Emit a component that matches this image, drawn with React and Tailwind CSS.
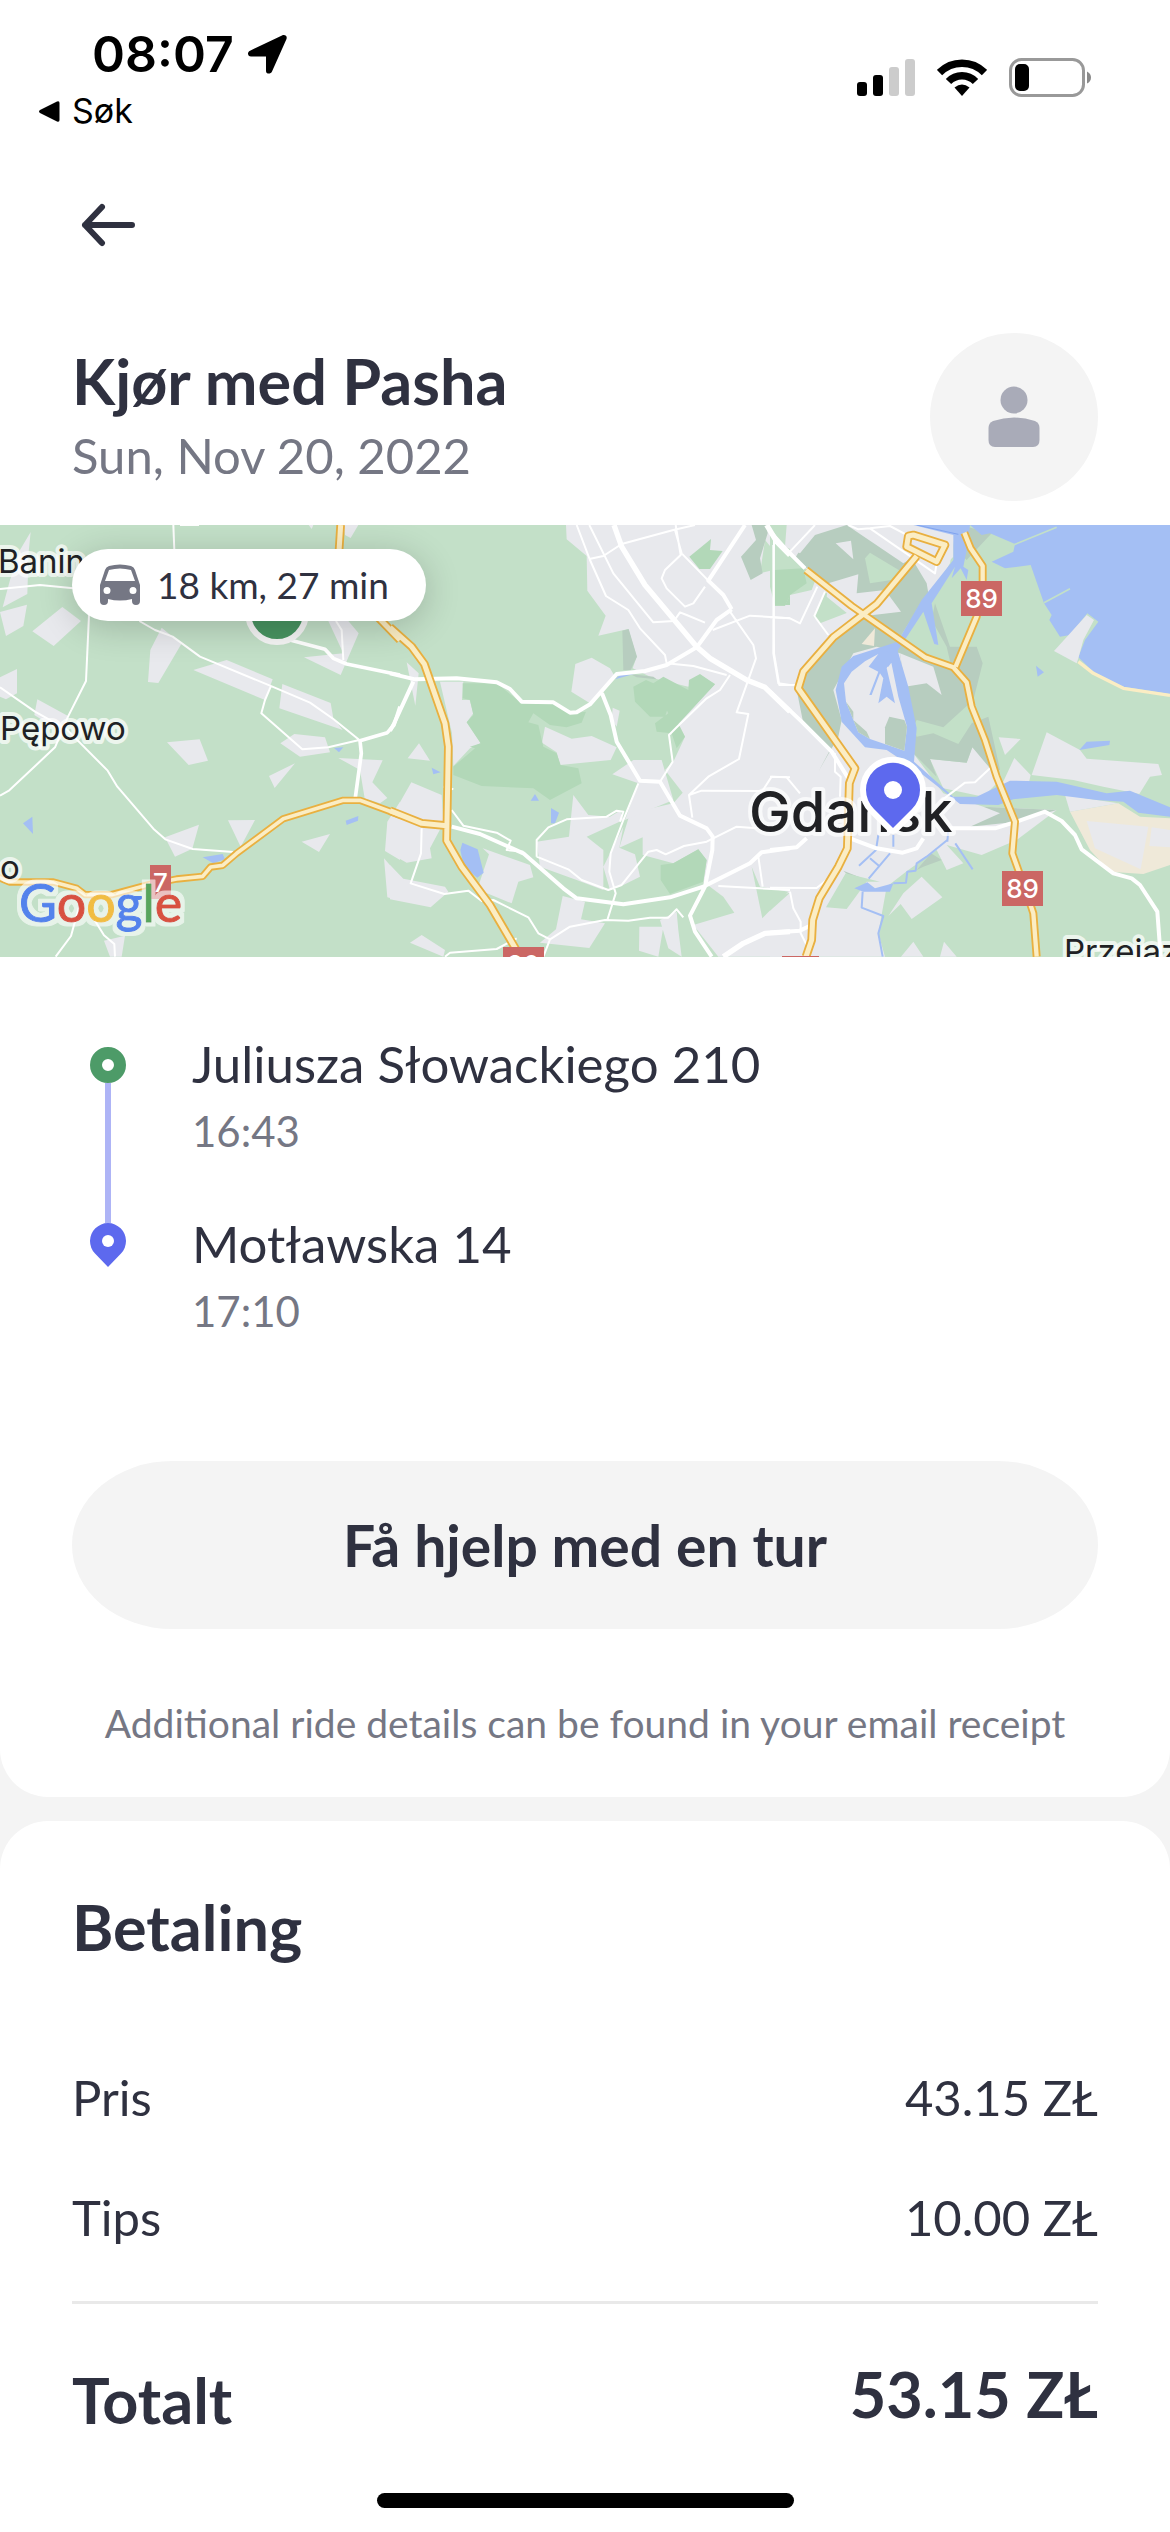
// Each map tile is drawn on its own 1200x1320 grid and placed side by side
const TILES = {
  west: 'translate(0 -5) scale(0.33333)',
  centre: 'translate(390 -5) scale(0.33333)',
  east: 'translate(770 -5) scale(0.33333)',
};

const LAND = [
  // built-up areas
  { tile: 'west', fill: '#e8e9ed', d: 'M92 36L86 95 82 222 8 262 30 180 60 90zM0 276L81 254 70 318 18 348zM97 334L187 261 243 303 161 378zM485 323L544 372 475 489 444 486 451 390zM580 450L680 420 818 478 795 540zM847 492L992 549 1000 595 1028 630 838 565zM985 303L1045 303 1076 340 1022 465 912 412 1030 400zM0 500L0 472 51 447 51 520 18 538 0 530zM112 538L204 588 190 640 103 585zM501 667L599 658 624 722 566 735zM883 642L975 652 990 697 900 710 841 670zM885 730L824 804 807 768zM1015 714L1148 721 1117 787 1162 834 1140 850 1094 835 1080 750zM684 901L765 900 722 980zM495 952L597 914 577 986 525 1010zM905 965L990 942 957 996zM1200 845L1162 905 1155 993 1200 1020zM1152 1015L1200 1070 1200 1142 1162 1132zM312 1262L375 1247 365 1310 330 1310zM1030 15L1075 15 1052 54 1035 45zM926 15L940 15 935 27z' },
  { tile: 'centre', fill: '#e8e9ed', d: 'M528 15L530 58 590 108 592 212 647 287 625 347 715 327 740 410 728 445 790 475 895 500 930 465 975 492 865 610 885 650 850 725 825 750 878 818 850 850 720 880 688 983 758 952 758 1005 850 1030 925 988 950 1020 940 1085 1000 1130 1033 1178 910 1215 985 1310 1200 1310 1200 15z' },
  { tile: 'centre', fill: '#e8e9ed', d: 'M556 432L605 413 660 445 672 465 635 520 600 550 544 515zM465 620L545 656 605 648 680 682 662 720 510 735 500 697 456 668zM668 563L689 572 680 620 665 600zM50 427L86 460 76 557zM150 485L220 485 216 540 239 540 250 580 230 607 272 670 240 685 190 738 186 640zM87 670L120 722 53 715zM64 787L155 825 160 910 120 985 125 1015 50 1028 0 1000 0 900zM0 1035L40 1076 165 1100 175 1115 122 1162 0 1138zM278 985L420 1035 430 1072 385 1085 365 1150 262 1108 297 1003zM95 1245L165 1290 160 1310 60 1268zM550 825L595 885 660 890 690 872 700 900 590 950 640 990 640 1110 560 1080 450 1040 440 965 537 950zM730 720L815 720 850 840 705 900 745 790 667 763zM700 920L688 983 735 1003 750 1070 700 1095 660 1110 640 1040zM518 1128L585 1145 573 1198 645 1210 598 1284 450 1268 498 1228zM748 1220L820 1220 805 1310 747 1292zM810 1200L860 1175 865 1230 875 1310 835 1285z' },
  { tile: 'east', fill: '#e8e9ed', d: 'M0 15L560 15 540 130 480 230 385 350 395 400 490 440 515 525 470 490 405 500 430 600 430 700 520 820 640 860 860 870 740 960 635 1005 530 975 580 1030 530 1050 500 990 415 1050 350 1100 325 1240 345 1310 0 1310zM480 717L590 728 607 682 670 740 690 780 640 830 520 805zM686 652L752 657 705 705zM830 637L930 690 950 716 1165 732 1176 765 1140 770 1108 822 1000 800 910 780 785 765zM733 714L782 765 775 795 695 795zM455 1070L517 1132 425 1197 392 1152 355 1188 400 1120zM430 1265L460 1310 393 1310zM522 1265L560 1310 510 1310z' },

  // parks and woods
  { tile: 'centre', fill: '#c3e0c8', d: 'M1085 1040L1110 1100 1195 1115 1117 1195zM1150 15L1200 15 1200 180 1150 180zM1125 60L1150 90 1150 150 1110 160z' },
  { tile: 'centre', fill: '#b2d8b8', d: 'M218 490L320 490 395 550 490 550 545 580 588 575 575 608 530 622 480 615 430 580 415 607 445 615 460 680 500 700 512 735 565 745 575 790 480 840 430 805 275 798 190 765 190 740 255 685 240 680 272 670 230 607 250 585 240 540 218 535zM730 500L768 480 825 505 838 550 825 590 780 590 735 545zM790 490L820 470 895 510 897 480 930 462 975 493 865 612 885 650 860 685 845 640 800 635 795 610 835 580zM898 110L963 57 960 90 998 93 960 147 928 147zM812 1035L850 1030 925 988 950 1020 940 1085 840 1122 812 1080zM1157 160L1200 160 1200 255 1157 255z' },
  { tile: 'centre', fill: '#b7cdbf', d: 'M1085 15L1130 15 1133 40 1110 115 1118 160 1082 180 1053 110 1098 60zM697 332L716 327 741 410 722 450 700 450zM720 462L790 470 800 478 740 472z' },
  { tile: 'east', fill: '#b7cdbf', d: 'M135 15L230 15 400 130 425 115 470 190 475 220 390 350 470 400 545 445 530 380 485 300 495 250 540 380 620 380 638 430 610 540 520 622 440 600 430 620 440 650 490 640 565 672 605 610 655 590 690 750 660 745 607 682 590 728 480 717 500 770 430 700 400 600 345 690 345 620 358 590 405 600 405 500 390 400 320 380 250 400 190 510 215 600 205 650 145 755 180 690 100 610 80 510 100 450 190 350 270 290 190 210 75 115zM570 15L665 40 590 120 570 100zM440 1050L483 1000 515 1020 460 1040zM640 860L860 870 740 905 600 920 690 880zM220 1052L290 1080 260 1088z' },
  { tile: 'east', fill: '#c3e0c8', d: 'M0 15L45 15 45 80 75 110 110 150 140 170 125 210 60 225 45 257 15 257 0 200zM285 115L300 98 395 155 365 180 300 190zM130 290L165 215 240 275 150 310zM227 1060L330 1085 290 1085 230 1167 168 1162zM0 1140L62 1117 0 1172z' },
  { tile: 'east', fill: '#b2d8b8', d: 'M15 150L100 145 110 190 60 225 45 257 15 257z' },
  { tile: 'east', fill: '#e8e9ed', d: 'M197 70L243 62 250 118zM175 190L265 163 260 220 345 210 393 275 310 285 250 295 170 230zM50 15L230 15 135 45 90 100 45 80zM300 15L550 40 550 110 495 165 300 55zM390 400L490 440 515 525 470 490 405 500z' },
  { tile: 'east', fill: '#efe9d9', d: 'M900 875L1045 850 1110 890 1200 895 1200 1035 1120 1062 1020 1055 960 990z' },
  { tile: 'east', fill: '#efe9d9', d: 'M275 372L315 325 312 378z' },
  { tile: 'east', fill: '#e8e9ed', d: 'M950 903L1135 920 1112 1048 975 985zM1145 922L1200 930 1200 982 1138 978zM885 825L980 840 1045 850 900 875z' },
];

const WATER = [
  { tile: 'west', d: 'M69 910L97 890 99 942zM608 1012L668 1002 675 1018 640 1030zM1037 902L1075 888 1074 902 1040 915zM1002 684L1030 682 1017 697z' },
  { tile: 'centre', d: 'M675 478L690 465 732 462zM125 743L152 757 130 763zM435 822L447 842 422 842zM483 864L507 878 495 910 483 910zM217 968L263 988 281 1058 262 1073 222 1040 211 990z' },
  { tile: 'east', d: 'M600 15L1200 15 1200 522 1060 500 970 455 925 412 945 360 985 305 952 280 900 345 870 350 838 300 845 285 822 250 782 135 705 145 665 125 730 95 735 72 660 40 635 45zM430 15L600 15 590 90 580 140 595 150 590 180 572 145 545 175 555 140 485 250 505 375 493 372 460 275 383 392 415 500 440 625 432 725 550 830 620 830 720 782 860 785 1010 820 1080 812 1200 862 1200 890 1105 878 1060 845 980 840 860 825 730 838 685 855 570 852 440 750 350 690 285 682 215 605 197 510 215 440 250 408 383 365 455 240 550 120 550 45zM798 437L822 457 803 470zM928 690L950 665 1020 662 1018 675zM253 1105L292 1087 315 1105 370 1090 360 1115 280 1115z' },
];

// the island between the two river arms, with the shipyard basins cut into it
const ISLAND = 'M285 424L325 402 296 440 355 440 364 428 385 530 411 620 403 692 300 657 265 637 228 545 222 490 245 455z';
const BASINS = 'M296 440L350 395 370 400 350 445 375 550 350 530 325 550 340 475 330 460 305 525 298 525 325 455z';

const WHITE_ROADS = [
  { tile: 'west', width: 6, d: 'M520 15L523 90M540 15L597 15M0 207L120 195 220 205M267 285L258 483 204 590 165 682 28 811 0 827M0 502L105 575 200 628 323 752 352 800 460 926 496 958 578 987 700 996M418 303L465 330 518 350 600 410 810 497 930 548 1000 597 1078 660 985 682 907 688 784 580 795 540 812 500M1008 303L1025 330 1030 420M240 1150L213 1248 167 1310M265 1170L312 1246 343 1272 345 1310' },
  { tile: 'west', width: 11, d: 'M870 360L975 388 1000 415 1040 432 1200 465M1200 560L1182 615 1162 638 1080 662 1084 700 1065 840' },
  { tile: 'centre', width: 6, d: 'M560 15L600 120 648 228 715 270 750 325 825 405 830 430 910 438 1010 465M598 15L670 160 790 307 852 303 870 277 890 285 945 308M598 117L640 108 695 72 850 30 915 15M857 15L872 105 825 150 815 175 830 205 885 260 910 250 945 200M855 30L875 100 955 182M968 330L1080 287 1200 295M1020 275L1090 375 1098 415 1040 577 1075 582 1047 717 955 770 897 825 907 893M897 825L935 812 1117 813 1145 770 1200 772M1020 465L990 510 950 535 860 622 837 645 848 725 810 785M1152 60L1150 400 1165 490 1200 495M185 870L220 917 320 938 362 962 350 990 400 995M440 1010L440 960 475 922 530 898 650 890 680 872 700 875 690 905M745 790L700 900 662 1000 658 1055 677 1120 652 1200M440 1010L535 1048 575 1080 655 1110 695 1095 775 995 800 990 827 1003 882 978 950 965 1040 920 1100 925M95 925L93 1000 62 1090 163 1122 235 1112 275 1143 310 1140 415 1192 445 1240 480 1258 540 1220 645 1200 715 1202 780 1193 835 1193 860 1168 880 1192M480 1258L460 1310M165 1310L180 1298 320 1287 380 1255M985 1098L1200 1110M1105 1010L1118 1100M160 800L190 808' },
  { tile: 'centre', width: 12, d: 'M0 460L75 478 200 475 320 487 360 507 395 545 490 547 540 578 560 577 600 553 680 462 765 453 830 435 920 382 980 300 1025 268M70 485L10 615 0 632M636 520L662 585 680 665 750 782 810 785 870 887 950 925 968 950 967 990 945 1100 900 1187 915 1235 965 1310M185 920L270 942 400 1000 520 1105 560 1135 700 1153 840 1132 940 1100 1080 1030 1115 997 1200 985M1065 15L955 182 1000 225 1025 268' },
  { tile: 'centre', width: 16, d: 'M672 15L695 80 765 195 920 380 960 415 1070 480 1125 502 1200 575M1130 15L1160 65 1200 105M1000 1310L1060 1270 1125 1240 1200 1235' },
  { tile: 'east', width: 6, d: 'M10 75L12 400 28 495 75 495M0 292L60 295 90 310 142 200M175 345L133 288 165 215M60 95L135 15M235 15L265 28 300 25 495 160 500 130M300 25L360 18 420 50M195 700L195 755 212 770 210 830M0 770L50 772 90 820M0 1103L140 1104 170 1080M60 1115L70 1165 92 1205 92 1240 110 1275M510 845L585 788 615 787 660 745' },
  { tile: 'east', width: 12, d: 'M0 515L95 605 185 695 235 775M240 955L320 985 398 998 440 985 460 955M540 925L675 925 740 905 825 875 875 903 915 945 935 988 1030 1060 1085 1075 1110 1095 1162 1175 1172 1310M0 990L80 982 110 955M0 1238L90 1232 125 1215M0 35L50 90 105 145' },
];

const CANALS = 'M370 945L370 980M325 945L318 990 267 1037M360 1000L296 1076M300 1015L330 1040M532 960L470 1010 440 1030 437 1052 412 1055 408 1088 370 1090M278 1115L275 1163 340 1188 325 1240 338 1310M535 930L532 965M556 970L608 1048';

const HIGHWAYS = [
  { tile: 'west', width: 22, d: 'M-20 1065L28 1086 160 1086 230 1105 255 1124 335 1124 450 1093 530 1077 608 1069 632 1041 668 1036 710 1000 850 896 1030 841 1080 841 1200 885' },
  { tile: 'west', width: 26, d: 'M1022 15L1016 110 1070 220 1145 303 1200 360' },
  { tile: 'centre', width: 26, d: 'M0 872L95 910 170 917M0 322L65 380 103 432 165 610 175 680 170 962 215 1040 300 1155 385 1300' },
  { tile: 'east', width: 24, d: 'M108 150L245 258 465 412 550 442 590 487 605 560 645 660 680 770 735 905 727 1000 770 1120 790 1180 800 1310M583 38L602 85 638 138 638 185 620 290 557 440' },
  { tile: 'east', width: 26, d: 'M440 108L320 252 190 352 100 455 85 505 255 745 238 790 232 985 205 1040 148 1135 128 1200 125 1260 108 1310M415 48L430 45 525 75 500 125 410 80z' },
];

const SHIELDS = [
  { x: 150, y: 340, w: 21, h: 34, label: '7' },
  { x: 961, y: 56, w: 41, h: 35, label: '89' },
  { x: 1002, y: 346, w: 41, h: 35, label: '89' },
  { x: 503, y: 422, w: 41, h: 35, label: '20' },
  { x: 782, y: 431, w: 37, h: 35, label: '' },
];

const PLACES = [
  { x: -2, y: 48, label: 'Banin' },
  { x: 0, y: 215, label: 'Pępowo' },
  { x: 0, y: 354, label: 'o' },
  { x: 1064, y: 438, label: 'Przejazdowo' },
];

const PAYMENT = [
  { label: 'Pris', amount: '43.15 ZŁ' },
  { label: 'Tips', amount: '10.00 ZŁ' },
];

function StatusBar() {
  return (
    <div className="flex h-[132px] justify-between pt-[24px] pr-[78px] pl-[39px] font-['Inter'] text-black">
      <div>
        <div className="flex h-[60px] items-center gap-[14px] pl-[53px]">
          <span className="text-[50px] leading-[60px] font-semibold">08:07</span>
          <svg width="39" height="39" viewBox="0 0 39 39">
            <path d="M34 .4C37-.8 39.500 1 38.500 4L24 36.500C22.800 39.500 18 39.300 18 36V21.600H3C-.6 21.600-1 17 2 15.700z" />
          </svg>
        </div>
        <a href="#sok" className="flex items-center gap-[12px] text-[34px] leading-[54px]">
          <svg width="21" height="21" viewBox="0 0 21 21">
            <path d="M1 9Q-1 10.500 1 12L18 20.500Q20.500 21.500 20.500 19V2Q20.500-.5 18 .5z" />
          </svg>
          Søk
        </a>
      </div>

      <div className="flex h-[108px] items-center gap-[22px] pb-[1px]">
        <svg width="58" height="38" viewBox="0 0 58 38">
          <rect x="0" y="23" width="10" height="14" rx="3" />
          <rect x="16" y="16" width="10" height="21" rx="3" />
          <rect x="32" y="8" width="10" height="29" rx="3" fill="#ccc" />
          <rect x="48" y="0" width="10" height="37" rx="3" fill="#ccc" />
        </svg>
        <svg width="50" height="38" viewBox="0 0 50 38" fill="none" stroke="#000" strokeWidth="7.500">
          <path d="M2.500 13.500C15 1 35 1 47.500 13.500" />
          <path d="M11.500 22.500C19 14.800 31 14.800 38.500 22.500" />
          <path d="M17.500 28.500Q25 22.500 32.500 28.500L25 37z" fill="#000" stroke="none" />
        </svg>
        <svg width="83" height="40" viewBox="0 0 83 40">
          <rect x="1.500" y="1.500" width="73" height="36" rx="11" fill="none" stroke="#999" strokeWidth="3" />
          <rect x="6" y="6" width="14" height="27" rx="5" />
          <path d="M78 13.500Q82 15.500 82 19.500T78 25.500z" fill="#8a8a8a" />
        </svg>
      </div>
    </div>
  );
}

function RouteMap() {
  return (
    <svg
      className="block h-[432px] w-full"
      viewBox="0 0 1170 432"
      preserveAspectRatio="xMidYMid slice"
      strokeLinejoin="round"
      fill="none"
    >
      <defs>
        <filter id="logo-halo">
          <feMorphology in="SourceAlpha" operator="dilate" radius="4" result="grown" />
          <feFlood floodColor="#fff" floodOpacity="0.6" />
          <feComposite in2="grown" operator="in" />
          <feMerge>
            <feMergeNode />
            <feMergeNode in="SourceGraphic" />
          </feMerge>
        </filter>
      </defs>

      <rect width="1170" height="432" fill="#c3e0c8" />

      {LAND.map((area, i) => (
        <path key={i} transform={TILES[area.tile]} d={area.d} fill={area.fill} />
      ))}

      {WATER.map((area) => (
        <path key={area.tile} transform={TILES[area.tile]} d={area.d} fill="#a4bff4" />
      ))}
      <g transform={TILES.east}>
        <path d={ISLAND} fill="#e8e9ed" />
        <path d="M358 590L403 600 411 620 403 692 345 672 345 622z" fill="#b7cdbf" />
        <path d="M228 545L250 575 250 600 290 635 300 657 265 637z" fill="#b7cdbf" />
        <path d={BASINS} fill="#a4bff4" />
        <path d="M925 425L970 460 1060 505 1200 526" stroke="#fbedc4" strokeWidth="10" />
        <path d="M950 285L972 300 940 360 925 415 920 430 852 393z" fill="#e8e9ed" />
        <path d="M730 75L860 22M822 248L900 206" stroke="#c3e0c8" strokeWidth="5" />
        <path d="M440 15L565 43" stroke="#7fa3ee" strokeWidth="3" />
        <path d={CANALS} stroke="#a4bff4" strokeWidth="6" />
      </g>

      {WHITE_ROADS.map((road, i) => (
        <path key={i} transform={TILES[road.tile]} d={road.d} stroke="#fff" strokeWidth={road.width} />
      ))}
      {HIGHWAYS.map((road, i) => (
        <path key={i} transform={TILES[road.tile]} d={road.d} stroke="#e9b040" strokeWidth={road.width} />
      ))}
      {HIGHWAYS.map((road, i) => (
        <path key={i} transform={TILES[road.tile]} d={road.d} stroke="#fbedc4" strokeWidth={road.width - 11} />
      ))}

      {SHIELDS.map((s) => (
        <g key={`${s.x}-${s.y}`}>
          <rect x={s.x} y={s.y} width={s.w} height={s.h} fill="#cb6764" />
          <text
            x={s.x + s.w / 2}
            y={s.y + 27}
            textAnchor="middle"
            fill="#fff"
            className="font-['Inter'] text-[26px] font-medium"
          >
            {s.label}
          </text>
        </g>
      ))}

      <g fill="#202124" stroke="#fff" strokeOpacity="0.7" className="[paint-order:stroke]">
        {PLACES.map((place) => (
          <text key={place.label} x={place.x} y={place.y} strokeWidth="8" className="font-['Inter'] text-[33px]">
            {place.label}
          </text>
        ))}
        <text x="749" y="307" strokeWidth="8" className="font-['Inter'] text-[56px] font-medium">
          Gdańsk
        </text>
      </g>

      <text x="19" y="397" strokeWidth="1" filter="url(#logo-halo)" className="font-['Lato'] text-[52px]">
        <tspan fill="#5283ec" stroke="#5283ec">G</tspan>
        <tspan fill="#d85140" stroke="#d85140">o</tspan>
        <tspan fill="#f1bd42" stroke="#f1bd42">o</tspan>
        <tspan fill="#5283ec" stroke="#5283ec">g</tspan>
        <tspan fill="#58a55c" stroke="#58a55c">l</tspan>
        <tspan fill="#d85140" stroke="#d85140">e</tspan>
      </text>

      {/* pickup and drop-off */}
      <circle cx="277" cy="88" r="29" fill="#489461" stroke="#f5f5f5" strokeWidth="6" />
      <path
        d="M893 303L874 284A27 27 0 1 1 912 284z"
        fill="#5d69ee"
        stroke="#fff"
        strokeWidth="12"
        className="[paint-order:stroke]"
      />
      <circle cx="893" cy="265" r="9" fill="#fff" />
    </svg>
  );
}

function CarIcon() {
  return (
    <svg width="42" height="42" viewBox="0 0 42 42">
      <path
        fillRule="evenodd"
        fill="#757784"
        d="M1 21L6 6Q7 3 10 2Q21-1 32 2Q35 3 36 6L41 21V37Q41 41 37 41T33 37V35Q21 38 9 35V37Q9 41 5 41T1 37zM6 17H36L32 6Q21 3 10 6zM8 23A3.500 3.500 0 1 0 8 30A3.500 3.500 0 1 0 8 23zM34 23A3.500 3.500 0 1 0 34 30A3.500 3.500 0 1 0 34 23z"
      />
    </svg>
  );
}

function Stop({ address, time }) {
  return (
    <li>
      <p className="text-[51px] leading-[60px]">{address}</p>
      <p className="mt-[10px] text-[42px] leading-[54px] text-[#757784]">{time}</p>
    </li>
  );
}

export default function App() {
  return (
    <div className="flex min-h-screen flex-col gap-[24px] bg-[#f4f4f4] font-['Lato',sans-serif] text-[#2f3140]">
      <main className="rounded-b-[48px] bg-white pb-[50px]">
        <StatusBar />

        {/* HEADER */}
        <header className="px-[72px] pt-[57px] pb-[24px]">
          <button aria-label="Tilbake" className="flex h-[72px] w-[72px] items-center justify-center">
            <svg width="54" height="44" viewBox="0 0 54 44" fill="none" stroke="#2f3140" strokeWidth="6" strokeLinecap="round" strokeLinejoin="round">
              <path d="M51 22H4M21 4L4 22L21 40" />
            </svg>
          </button>

          <div className="mt-[72px] flex items-center justify-between">
            <div className="pb-[5px]">
              <h1 className="text-[63px] leading-[72px] font-bold">Kjør med Pasha</h1>
              <p className="mt-[8px] text-[49px] leading-[60px] text-[#757784]">Sun, Nov 20, 2022</p>
            </div>
            <div className="flex h-[168px] w-[168px] items-center justify-center rounded-full bg-[#f4f4f4]">
              <svg width="52" height="62" viewBox="0 0 52 62" fill="#a9abb8">
                <circle cx="26" cy="14" r="13.500" />
                <path d="M.5 42Q.5 37 5 35Q26 28 47 35Q51.500 37 51.500 42V54Q51.500 61 45 61H7Q.5 61 .5 54z" />
              </svg>
            </div>
          </div>
        </header>

        {/* MAP */}
        <div className="relative overflow-hidden">
          <RouteMap />
          <div className="absolute top-[24px] left-[72px] flex h-[72px] items-center gap-[16px] rounded-full bg-white pr-[37px] pl-[27px] text-[37px] leading-[48px] shadow-[0_6px_36px_rgba(0,0,0,0.2)]">
            <CarIcon />
            18 km, 27 min
          </div>
        </div>

        {/* ROUTE */}
        <div className="flex gap-[66px] px-[90px] pt-[77px]">
          <div className="flex w-[36px] flex-col items-center pt-[13px] pb-[71px]">
            <svg width="36" height="36" viewBox="0 0 36 36">
              <circle cx="18" cy="18" r="12" fill="#fff" stroke="#4d9b68" strokeWidth="12" />
            </svg>
            <div className="w-[6px] flex-1 bg-[#aeb4f6]" />
            <svg width="36" height="44" viewBox="0 0 36 44">
              <path d="M18 44L5 30.500A18 18 0 1 1 31 30.500z" fill="#5d69ee" />
              <circle cx="18" cy="18" r="6" fill="#fff" />
            </svg>
          </div>
          <ul className="flex flex-col gap-[56px]">
            <Stop address="Juliusza Słowackiego 210" time="16:43" />
            <Stop address="Motławska 14" time="17:10" />
          </ul>
        </div>

        <div className="px-[72px] pt-[123px] text-center">
          <button className="h-[168px] w-full rounded-[100px/84px] bg-[#f4f4f4] text-[57px] leading-[72px] font-bold">
            Få hjelp med en tur
          </button>
          <p className="mt-[70px] text-[39px] leading-[48px] text-[#757784]">
            Additional ride details can be found in your email receipt
          </p>
        </div>
      </main>

      {/* PAYMENT */}
      <section className="flex flex-1 flex-col rounded-t-[48px] bg-white px-[72px] pt-[70px]">
        <h2 className="text-[63px] leading-[72px] font-bold">Betaling</h2>

        <dl className="mt-[74px]">
          {PAYMENT.map((row) => (
            <div key={row.label} className="flex justify-between py-[30px] text-[49px] leading-[60px]">
              <dt>{row.label}</dt>
              <dd>{row.amount}</dd>
            </div>
          ))}
          <div className="mt-[24px] flex justify-between border-t-3 border-[#e9e9e9] pt-[54px] text-[63px] leading-[72px] font-bold">
            <dt className="pt-[6px]">Totalt</dt>
            <dd>53.15 ZŁ</dd>
          </div>
        </dl>

        <div className="mt-auto mb-[24px] h-[15px] w-[417px] self-center rounded-full bg-black" />
      </section>
    </div>
  );
}
